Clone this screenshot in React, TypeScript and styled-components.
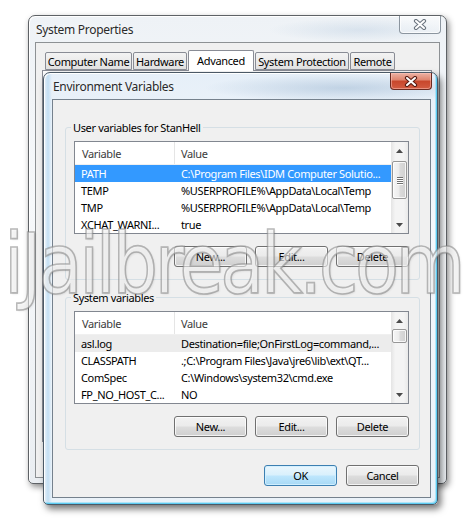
import React from 'react';
import styled, { createGlobalStyle, css } from 'styled-components';

const Global = createGlobalStyle`
  html, body { margin: 0; padding: 0; background: #fff; }
  body {
    width: 466px; height: 520px; overflow: hidden;
    font-family: "Noto Sans", "DejaVu Sans", sans-serif;
    font-size: 11px;
    letter-spacing: -0.35px;
    color: #000;
  }
`;

const Desktop = styled.div`
  position: relative;
  width: 466px;
  height: 520px;
  overflow: hidden;
  background: #fff;
`;

const Window = styled.div<{ $x: number; $y: number; $w: number; $h: number; $active?: boolean }>`
  position: absolute;
  left: ${p => p.$x}px;
  top: ${p => p.$y}px;
  width: ${p => p.$w}px;
  height: ${p => p.$h}px;
  box-sizing: border-box;
  display: flex;
  flex-direction: column;
  border-radius: 7px 7px 5px 5px;
  ${p =>
    p.$active
      ? css`
          border: 1px solid #4b5966;
          background:
            radial-gradient(ellipse 140px 14px at 300px 15px, rgba(120, 155, 190, 0.35), rgba(120, 155, 190, 0) 100%),
            linear-gradient(90deg, rgba(190, 220, 242, 0.0) 0px, rgba(190, 220, 242, 0.9) 4px, rgba(190, 220, 242, 0) 8px),
            linear-gradient(180deg, #e6eff8 0%, #f4f8fc 35%, #eaf2f9 100%);
          box-shadow:
            inset 1px 1px 0 rgba(255, 255, 255, 0.95),
            inset -1px -1px 0 #5ccbf2,
            inset -2px -2px 0 rgba(120, 215, 245, 0.5),
            3px 4px 7px rgba(0, 0, 0, 0.55);
        `
      : css`
          border: 1px solid #5e6266;
          background:
            radial-gradient(ellipse 90px 12px at 330px 14px, rgba(150, 180, 210, 0.25), rgba(150, 180, 210, 0) 100%),
            linear-gradient(180deg, #eef2f6 0%, #f7f9fb 40%, #eaeef2 100%);
          box-shadow:
            inset 1px 1px 0 rgba(255, 255, 255, 0.95),
            2px 3px 6px rgba(0, 0, 0, 0.45);
        `}
`;

const TitleBar = styled.div<{ $pad: number }>`
  height: 26px;
  flex: none;
  display: flex;
  justify-content: space-between;
  align-items: flex-start;
  padding-left: ${p => p.$pad}px;
`;

const Title = styled.span`
  margin-top: 6px;
  font-size: 12px;
  letter-spacing: -0.3px;
  line-height: 15px;
  color: #2a2a2a;
  text-shadow: 0 0 6px rgba(255, 255, 255, 1);
`;

const CloseBtn = styled.div<{ $red?: boolean; $h: number }>`
  width: 42px;
  height: ${p => p.$h}px;
  margin-right: 5px;
  box-sizing: border-box;
  border-radius: 0 0 4px 4px;
  display: flex;
  align-items: center;
  justify-content: center;
  ${p =>
    p.$red
      ? css`
          border: 1px solid #6a2a20;
          border-top: none;
          background: linear-gradient(180deg, #ecb2a4 0%, #df8670 42%, #c8472c 52%, #d25c42 100%);
          box-shadow: inset 0 0 0 1px rgba(255, 200, 190, 0.5);
        `
      : css`
          border: 1px solid #8b959f;
          border-top: none;
          background: linear-gradient(180deg, rgba(255, 255, 255, 0.6), rgba(235, 240, 245, 0.6));
          box-shadow: inset 0 0 0 1px rgba(255, 255, 255, 0.7);
        `}
`;

const XGlyph = ({ dark, light }: { dark: string; light: string }) => (
  <svg width="14" height="11" viewBox="0 0 14 11">
    <path d="M3 2 L11 9 M11 2 L3 9" stroke={dark} strokeWidth="4.2" strokeLinecap="round" fill="none" />
    <path d="M3 2 L11 9 M11 2 L3 9" stroke={light} strokeWidth="2" strokeLinecap="round" fill="none" />
  </svg>
);

/* ---------- System Properties (behind) ---------- */

const SysClient = styled.div`
  flex: 1;
  margin: 0 6px 5px 6px;
  border: 1px solid #8d9194;
  background: #f0f0f0;
  display: flex;
  flex-direction: column;
  padding: 9px 7px 0 6px;
`;

const TabStrip = styled.div`
  display: flex;
  align-items: flex-end;
  gap: 1px;
  padding-left: 3px;
  height: 18px;
  position: relative;
  z-index: 1;
`;

const Tab = styled.div<{ $w: number; $sel?: boolean }>`
  width: ${p => p.$w}px;
  box-sizing: border-box;
  height: ${p => (p.$sel ? 21 : 18)}px;
  margin-bottom: ${p => (p.$sel ? -1 : 0)}px;
  border: 1px solid #898c95;
  border-bottom: ${p => (p.$sel ? 'none' : '1px solid #898c95')};
  border-radius: 2px 2px 0 0;
  background: ${p => (p.$sel ? '#fff' : 'linear-gradient(180deg, #f3f3f3 0%, #ebebeb 50%, #e0e0e0 100%)')};
  display: flex;
  align-items: ${p => (p.$sel ? 'flex-start' : 'center')};
  padding-top: ${p => (p.$sel ? 2 : 0)}px;
  justify-content: center;
  font-size: 11px;
  line-height: 15px;
  white-space: nowrap;
`;

const TabPanel = styled.div`
  height: 370px;
  border: 1px solid #898c95;
  background: #fcfcfc;
`;

/* ---------- Environment Variables ---------- */

const EnvClient = styled.div`
  flex: 1;
  margin: 0 6px 6px 8px;
  border: 1px solid #75818d;
  background: #f0f0f0;
  display: flex;
  flex-direction: column;
  padding: 20px 10px 0 12px;
`;

const Group = styled.fieldset`
  margin: 0;
  padding: 6px 10px 12px 8px;
  border: 1px solid #d5dfe5;
  border-radius: 3px;
  min-width: 0;
  display: flex;
  flex-direction: column;
  & + & {
    margin-top: 10px;
  }
`;

const Legend = styled.legend`
  padding: 0 2px;
  margin-left: -3px;
  font-size: 11px;
  line-height: 15px;
  color: #000;
`;

const ListView = styled.div`
  width: 335px;
  height: 93px;
  box-sizing: border-box;
  border: 1px solid #828790;
  background: #fff;
  display: grid;
  grid-template-columns: 1fr 17px;
`;

const Table = styled.div`
  display: flex;
  flex-direction: column;
  overflow: hidden;
`;

const HeaderRow = styled.div`
  height: 23px;
  flex: none;
  display: grid;
  grid-template-columns: 100px 1fr;
  border-bottom: 1px solid #f0f0f0;
  box-sizing: border-box;
`;

const HeaderCell = styled.div<{ $first?: boolean }>`
  display: flex;
  align-items: center;
  padding-left: ${p => (p.$first ? 7 : 6)}px;
  color: #3b3b3b;
  font-size: 11px;
  ${p => p.$first && 'border-right: 1px solid #e5e5e5;'}
`;

const Row = styled.div<{ $sel?: 'active' | 'inactive' }>`
  height: 17px;
  flex: none;
  display: grid;
  grid-template-columns: 100px 1fr;
  align-items: center;
  font-size: 11px;
  line-height: 17px;
  white-space: nowrap;
  background: ${p => (p.$sel === 'active' ? '#3399ff' : p.$sel === 'inactive' ? '#ececec' : 'transparent')};
  color: ${p => (p.$sel === 'active' ? '#fff' : '#000')};
  &:first-of-type {
    margin-top: 1px;
  }
`;

const Cell = styled.span`
  padding-left: 6px;
  overflow: hidden;
`;

const ScrollBar = styled.div`
  display: flex;
  flex-direction: column;
  background: linear-gradient(90deg, #e4e4e4 0%, #f4f4f4 25%, #f4f4f4 75%, #e9e9e9 100%);
`;

const ArrowBtn = styled.div`
  height: 17px;
  flex: none;
  display: flex;
  align-items: center;
  justify-content: center;
`;

const Track = styled.div`
  flex: 1;
  padding: 0 1px;
  display: flex;
  flex-direction: column;
`;

const Thumb = styled.div`
  box-sizing: border-box;
  border: 1px solid #979797;
  border-radius: 2px;
  background: linear-gradient(90deg, #f6f6f6 0%, #ececec 45%, #dadada 55%, #d0d0d0 100%);
  box-shadow: inset 0 0 0 1px rgba(255, 255, 255, 0.8);
  display: flex;
  flex-direction: column;
  align-items: center;
  justify-content: center;
  gap: 1px;
`;

const Grip = styled.div`
  width: 6px;
  height: 1px;
  background: #6f6f6f;
  box-shadow: 0 1px 0 #fff;
`;

const ButtonRow = styled.div<{ $top: number }>`
  display: flex;
  justify-content: flex-end;
  gap: 8px;
  margin-top: ${p => p.$top}px;
`;

const Button = styled.div<{ $default?: boolean }>`
  width: 73px;
  height: 21px;
  box-sizing: border-box;
  border-radius: 3px;
  display: flex;
  align-items: center;
  justify-content: center;
  font-size: 11px;
  color: #000;
  ${p =>
    p.$default
      ? css`
          border: 1px solid #3c7fb1;
          background: linear-gradient(180deg, #eaf6fd 0%, #d9f0fc 48%, #bee6fd 52%, #a7d9f5 100%);
          box-shadow: inset 0 0 0 1px rgba(210, 240, 255, 0.9);
        `
      : css`
          border: 1px solid #707070;
          background: linear-gradient(180deg, #f2f2f2 0%, #ebebeb 48%, #dddddd 52%, #cfcfcf 100%);
          box-shadow: inset 0 0 0 1px rgba(255, 255, 255, 0.75);
        `}
`;

const Footer = styled.div`
  display: flex;
  justify-content: flex-end;
  gap: 9px;
  margin-top: 15px;
  padding-right: 1px;
`;

const Watermark = styled.div`
  position: absolute;
  left: 4px;
  top: 234px;
  font-family: "DejaVu Sans", sans-serif;
  font-size: 72px;
  line-height: 72px;
  letter-spacing: -3.4px;
  white-space: nowrap;
  transform: scaleY(1.16);
  transform-origin: 50% 100%;
  color: rgba(255, 255, 255, 0.58);
  -webkit-text-stroke: 1.5px rgba(130, 130, 130, 0.55);
  text-shadow: 1px 1px 2px rgba(0, 0, 0, 0.12);
  pointer-events: none;
`;

type Item = { n: string; v: string; sel?: 'active' | 'inactive' };

const userVars: Item[] = [
  { n: 'PATH', v: 'C:\\Program Files\\IDM Computer Solutio...', sel: 'active' },
  { n: 'TEMP', v: '%USERPROFILE%\\AppData\\Local\\Temp' },
  { n: 'TMP', v: '%USERPROFILE%\\AppData\\Local\\Temp' },
  { n: 'XCHAT_WARNI...', v: 'true' },
];

const sysVars: Item[] = [
  { n: 'asl.log', v: 'Destination=file;OnFirstLog=command,...', sel: 'inactive' },
  { n: 'CLASSPATH', v: '.;C:\\Program Files\\Java\\jre6\\lib\\ext\\QT...' },
  { n: 'ComSpec', v: 'C:\\Windows\\system32\\cmd.exe' },
  { n: 'FP_NO_HOST_C...', v: 'NO' },
];

const Arrow = ({ up }: { up?: boolean }) => (
  <svg width="7" height="4" viewBox="0 0 7 4">
    <path d={up ? 'M0 4 L3.5 0 L7 4 Z' : 'M0 0 L3.5 4 L7 0 Z'} fill="#4a4a4a" />
  </svg>
);

const VarList = ({ items, thumbTop, thumbH, grip }: { items: Item[]; thumbTop: number; thumbH: number; grip?: boolean }) => (
  <ListView>
    <Table>
      <HeaderRow>
        <HeaderCell $first>Variable</HeaderCell>
        <HeaderCell>Value</HeaderCell>
      </HeaderRow>
      {items.map(it => (
        <Row key={it.n} $sel={it.sel}>
          <Cell>{it.n}</Cell>
          <Cell>{it.v}</Cell>
        </Row>
      ))}
    </Table>
    <ScrollBar>
      <ArrowBtn>
        <Arrow up />
      </ArrowBtn>
      <Track>
        <Thumb style={{ marginTop: thumbTop, height: thumbH }}>
          {grip && (
            <>
              <Grip />
              <Grip />
              <Grip />
              <Grip />
            </>
          )}
        </Thumb>
      </Track>
      <ArrowBtn>
        <Arrow />
      </ArrowBtn>
    </ScrollBar>
  </ListView>
);

export default function App() {
  return (
    <Desktop>
      <Global />
      <Window $x={28} $y={15} $w={419} $h={469}>
        <TitleBar $pad={7}>
          <Title>System Properties</Title>
          <CloseBtn $h={18}>
            <XGlyph dark="#6d7680" light="#ffffff" />
          </CloseBtn>
        </TitleBar>
        <SysClient>
          <TabStrip>
            <Tab $w={87}>Computer Name</Tab>
            <Tab $w={54}>Hardware</Tab>
            <Tab $w={66} $sel>Advanced</Tab>
            <Tab $w={94}>System Protection</Tab>
            <Tab $w={45}>Remote</Tab>
          </TabStrip>
          <TabPanel />
        </SysClient>
      </Window>

      <Window $x={43} $y={72} $w={395} $h={433} $active>
        <TitleBar $pad={9}>
          <Title>Environment Variables</Title>
          <CloseBtn $red $h={17}>
            <XGlyph dark="#5a1d14" light="#ffffff" />
          </CloseBtn>
        </TitleBar>
        <EnvClient>
          <Group>
            <Legend>User variables for StanHell</Legend>
            <VarList items={userVars} thumbTop={2} thumbH={38} grip />
            <ButtonRow $top={12}>
              <Button>New...</Button>
              <Button>Edit...</Button>
              <Button>Delete</Button>
            </ButtonRow>
          </Group>
          <Group>
            <Legend>System variables</Legend>
            <VarList items={sysVars} thumbTop={0} thumbH={14} />
            <ButtonRow $top={12}>
              <Button>New...</Button>
              <Button>Edit...</Button>
              <Button>Delete</Button>
            </ButtonRow>
          </Group>
          <Footer>
            <Button $default>OK</Button>
            <Button>Cancel</Button>
          </Footer>
        </EnvClient>
      </Window>

      <Watermark>iJailbreak.com</Watermark>
    </Desktop>
  );
}
